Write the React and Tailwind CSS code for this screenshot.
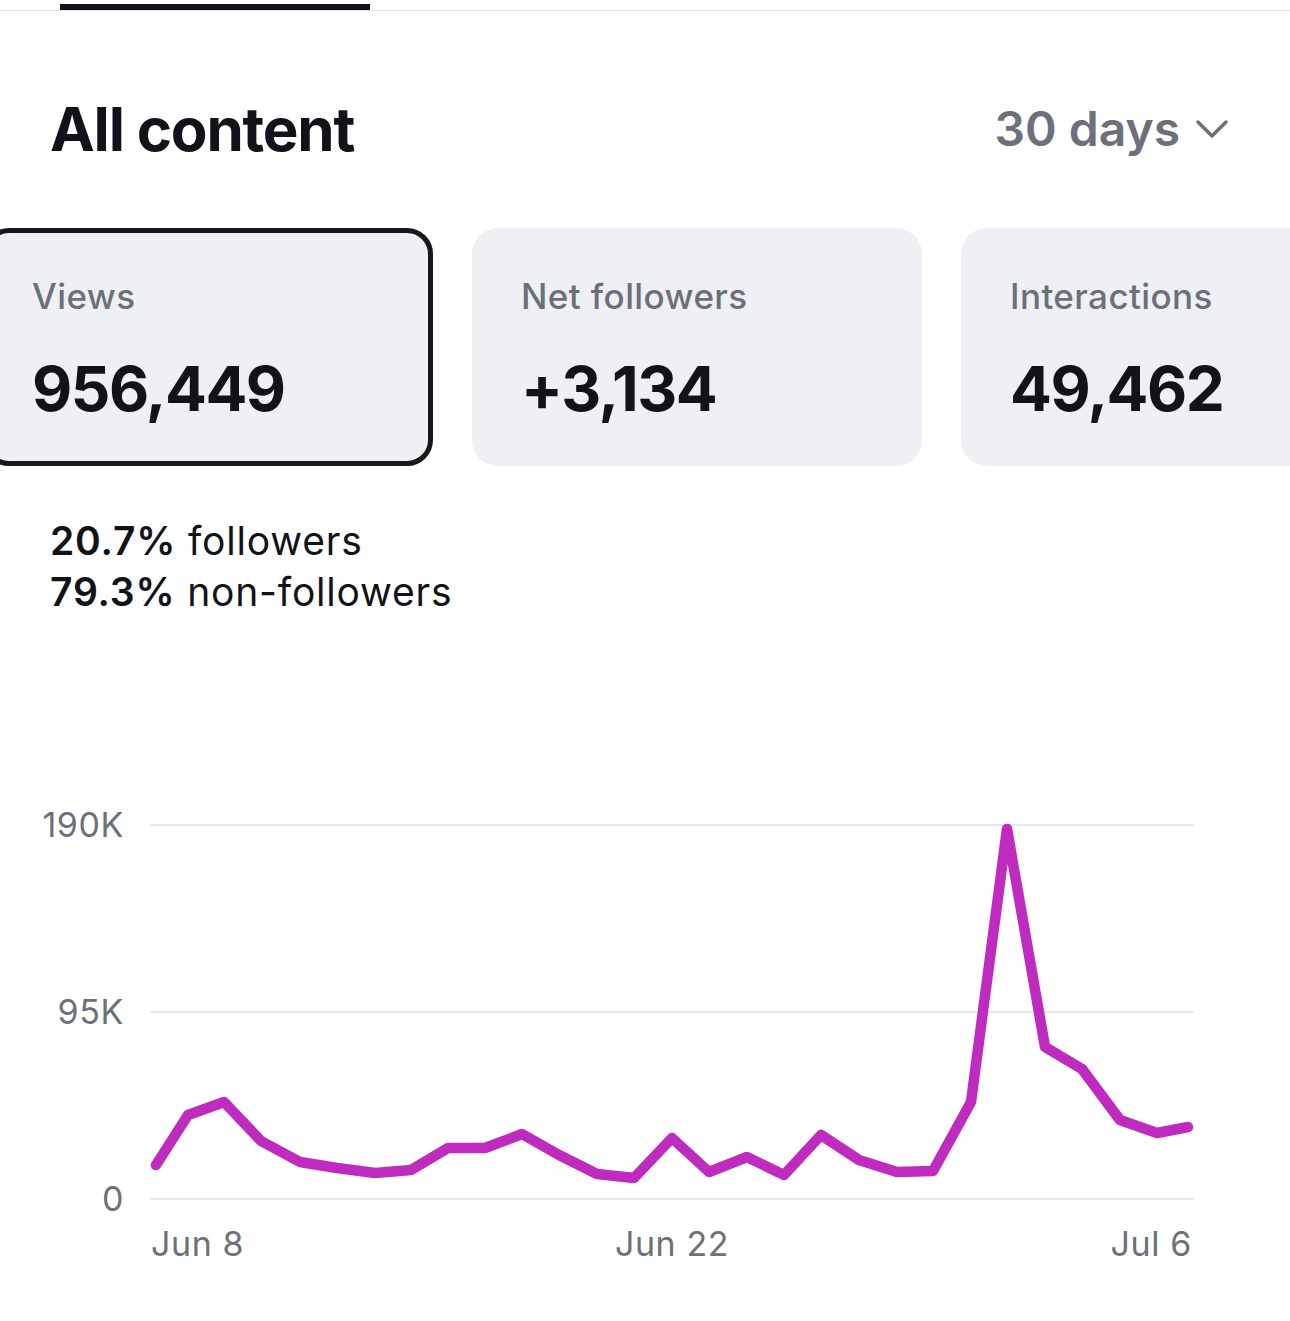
import React from "react";

// daily view counts, plotted in page pixels (x, y)
const points = [
    [156, 1165], [188, 1115], [224, 1102], [261, 1141], [300, 1162],
    [337, 1168], [375, 1173], [411, 1170], [448, 1148], [485, 1148],
    [522, 1134], [559, 1155], [597, 1174], [634, 1178], [672, 1138],
    [709, 1172], [747, 1157], [784, 1175], [821, 1135], [859, 1160],
    [897, 1172], [933, 1171], [971, 1102], [1007, 829], [1045, 1047],
    [1082, 1069], [1120, 1120], [1157, 1133], [1188, 1127],
];

const gridLines = [
    { y: 825, label: "190K" },
    { y: 1012, label: "95K" },
    { y: 1199, label: "0" },
];

const StatCard = ({ label, value, active }) => (
    <div
        className={`shrink-0 w-[450px] h-[238px] rounded-[26px] bg-[#eff0f4] border-[5px] pl-[44px] pt-[46px] ${
            active ? "border-[#18181b]" : "border-transparent"
        }`}
    >
        <div className="text-[35px] leading-none font-medium text-[#6b7079] tracking-[0.4px]">{label}</div>
        <div className="mt-[44px] text-[62px] leading-none font-bold text-[#111318] tracking-[-1.5px]">
            {value}
        </div>
    </div>
);

const ViewsChart = () => {
    const d = points.map(([x, y], i) => `${i === 0 ? "M" : "L"}${x} ${y}`).join(" ");
    const label = { fontSize: 34, fill: "#6b7079", letterSpacing: 0.6 };
    return (
        <svg width="1290" height="520" viewBox="0 780 1290 520" className="block" style={{ fontFamily: "Inter, sans-serif" }}>
            {gridLines.map((g) => (
                <g key={g.label}>
                    <line x1="150" x2="1194" y1={g.y} y2={g.y} stroke="#e6e7eb" strokeWidth="2" />
                    <text x="124" y={g.y + 12} textAnchor="end" {...label}>
                        {g.label}
                    </text>
                </g>
            ))}
            <path d={d} fill="none" stroke="#c02bbf" strokeWidth="10.5" strokeLinejoin="round" strokeLinecap="round" />
            <text x="151" y="1256" {...label}>Jun 8</text>
            <text x="672" y="1256" textAnchor="middle" {...label}>Jun 22</text>
            <text x="1192" y="1256" textAnchor="end" {...label}>Jul 6</text>
        </svg>
    );
};

export default function App() {
    return (
        <div className="w-full h-[1321px] bg-white overflow-hidden font-['Inter',sans-serif] text-[#111318]">
            {/* tab strip */}
            <div className="border-b border-[#e2e2e4]">
                <div className="ml-[60px] mt-[4px] w-[310px] h-[6px] bg-[#111318]"></div>
            </div>

            <div className="mt-[88px] h-[60px] px-[50px] flex items-center justify-between">
                <h1 className="text-[60px] leading-none font-bold tracking-[-1.2px]">All content</h1>
                <button className="flex items-center gap-[16px] pr-[12px] text-[#6b7079]">
                    <span className="text-[48px] leading-none font-semibold">30 days</span>
                    <svg width="32" height="20" viewBox="0 0 32 20" fill="none">
                        <path d="M2 3 L16 17 L30 3" stroke="#6b7079" strokeWidth="3.5" strokeLinecap="round" strokeLinejoin="round" />
                    </svg>
                </button>
            </div>

            <div className="mt-[69px] -ml-[17px] flex gap-[39px]">
                <StatCard label="Views" value="956,449" active />
                <StatCard label="Net followers" value="+3,134" />
                <StatCard label="Interactions" value="49,462" />
            </div>

            <div className="mt-[49px] px-[50px] text-[39px] leading-[51px] tracking-[0.8px]">
                <div><span className="font-semibold">20.7%</span> followers</div>
                <div><span className="font-semibold">79.3%</span> non-followers</div>
            </div>

            <div className="mt-[163px]">
                <ViewsChart />
            </div>
        </div>
    );
}
